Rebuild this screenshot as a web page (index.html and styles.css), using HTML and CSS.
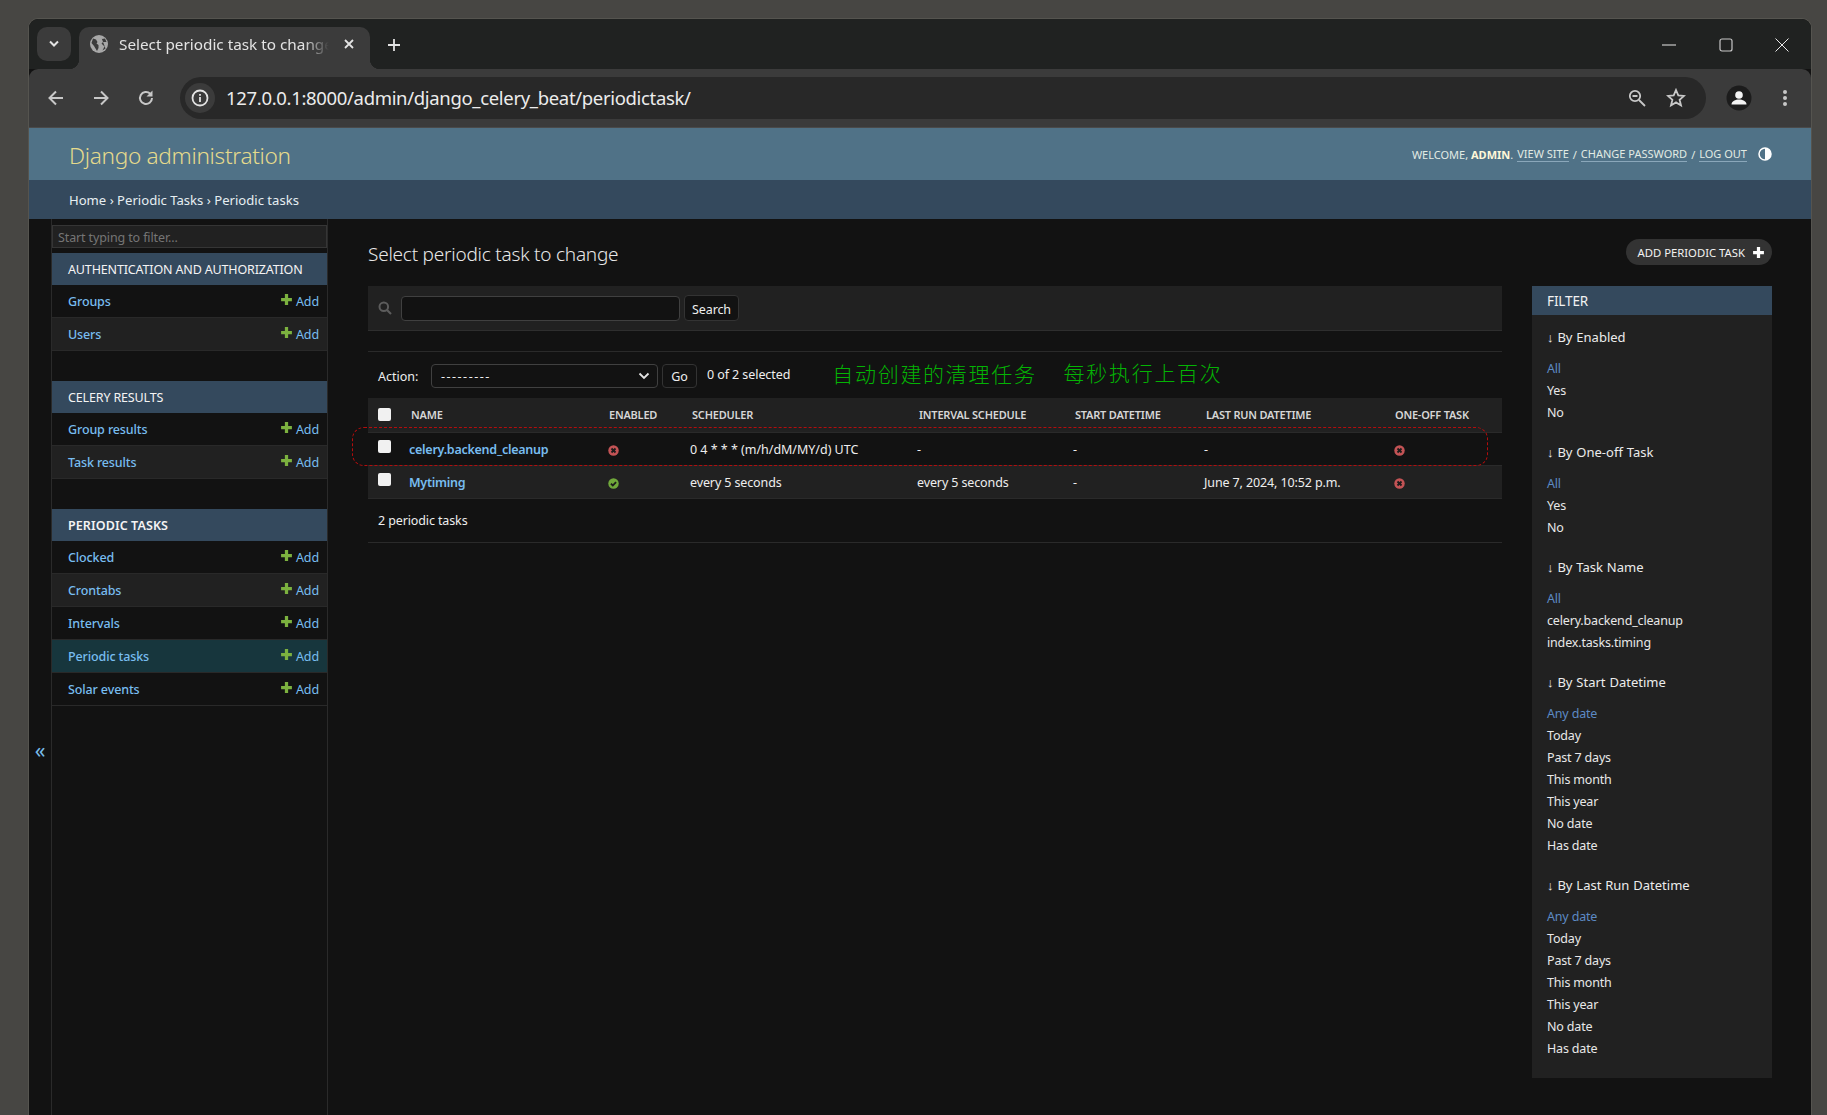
FILE: index.html
```html
<!DOCTYPE html>
<html lang="en">
<head>
<meta charset="utf-8">
<title>Select periodic task to change</title>
<link rel="stylesheet" href="styles.css">
</head>
<body>
<svg class="defs" width="0" height="0" aria-hidden="true">
  <symbol id="plus" viewBox="0 0 12 12"><path d="M4.500 1h3v3.500H11v3H7.500V11h-3V7.500H1v-3h3.500z" fill="currentColor"/></symbol>
  <symbol id="no" viewBox="0 0 12 12"><circle cx="6" cy="6" r="5.700" fill="#c35355"/><path d="M3.800 3.800l4.400 4.400M8.200 3.800L3.800 8.200" stroke="#1c1c1c" stroke-width="2"/></symbol>
  <symbol id="yes" viewBox="0 0 12 12"><circle cx="6" cy="6" r="5.700" fill="#70a83b"/><path d="M3.200 6.200l2 2 3.600-3.800" stroke="#1c1c1c" stroke-width="2" fill="none"/></symbol>
</svg>
<div class="window">
  <div class="tabstrip">
    <div class="tabsearch"><svg width="12" height="8" viewBox="0 0 12 8"><path d="M2 1.500l4 4 4-4" fill="none" stroke="#e3e3e3" stroke-width="2"/></svg></div>
    <div class="tab">
      <svg class="favicon" width="18" height="18" viewBox="0 0 18 18"><circle cx="9" cy="9" r="9" fill="#a8a8a8"/><path d="M3 3.500l3 1 1.500 2.500-1 1.500 2 1.500v3l-1.500 3L4 11 1.500 8zM11 1.500l1 2.500 3-.5 1.500 3.500-3.500 0-1.500 1.500 3 3-2 4 3-2" fill="#3b3b3b"/></svg>
      <span class="tabtitle">Select periodic task to change</span>
      <svg class="tabclose" width="10" height="10" viewBox="0 0 10 10"><path d="M1 1l8 8M9 1L1 9" stroke="#e3e3e3" stroke-width="1.800"/></svg>
    </div>
    <svg class="newtab" width="14" height="14" viewBox="0 0 14 14"><path d="M7 1v12M1 7h12" stroke="#e3e3e3" stroke-width="1.800"/></svg>
    <div class="winbtns">
      <svg width="14" height="14" viewBox="0 0 14 14"><path d="M0 7h14" stroke="#e8e8e8" stroke-width="1"/></svg>
      <svg width="14" height="14" viewBox="0 0 14 14"><rect x="1" y="1" width="12" height="12" rx="2" fill="none" stroke="#c8c8c8" stroke-width="1.200"/></svg>
      <svg width="14" height="14" viewBox="0 0 14 14"><path d="M.5.500l13 13M13.500.500l-13 13" stroke="#e8e8e8" stroke-width="1"/></svg>
    </div>
  </div>
  <div class="toolbar">
    <svg class="navicon" width="18" height="18" viewBox="0 0 18 18"><path d="M16 9H3M9 2.500L2.500 9 9 15.500" fill="none" stroke="#c7c7c7" stroke-width="2"/></svg>
    <svg class="navicon" width="18" height="18" viewBox="0 0 18 18"><path d="M2 9h13M9 2.500L15.500 9 9 15.500" fill="none" stroke="#c7c7c7" stroke-width="2"/></svg>
    <svg class="navicon" width="18" height="18" viewBox="0 0 18 18"><path d="M15 9a6 6 0 1 1-1.800-4.300" fill="none" stroke="#c7c7c7" stroke-width="2"/><path d="M15.500 1.500v6h-6z" fill="#c7c7c7"/></svg>
    <div class="omnibox">
      <div class="siteinfo"><svg width="18" height="18" viewBox="0 0 18 18"><circle cx="9" cy="9" r="7.500" fill="none" stroke="#e3e3e3" stroke-width="1.800"/><path d="M9 8v5M9 5v1.800" stroke="#e3e3e3" stroke-width="1.800"/></svg></div>
      <span class="url">127.0.0.1:8000/admin/django_celery_beat/periodictask/</span>
      <svg class="omni-zoom" width="18" height="18" viewBox="0 0 18 18"><circle cx="7" cy="7" r="5.200" fill="none" stroke="#c7c7c7" stroke-width="1.800"/><path d="M4.500 7h5M11 11l6 6" stroke="#c7c7c7" stroke-width="1.800"/></svg>
      <svg class="omni-star" width="20" height="20" viewBox="0 0 20 20"><path d="M10 2l2.300 5.400 5.700.5-4.400 3.800 1.400 5.700L10 14.400l-5 3 1.400-5.700L2 7.900l5.700-.5z" fill="none" stroke="#c7c7c7" stroke-width="1.800"/></svg>
    </div>
    <div class="avatar"><svg width="26" height="26" viewBox="0 0 26 26"><circle cx="13" cy="13" r="12.500" fill="#1c1c1c"/><circle cx="13" cy="10" r="3.800" fill="#f2f2f2"/><path d="M5.500 19.500c0-3.500 4-5 7.500-5s7.500 1.500 7.500 5z" fill="#f2f2f2"/></svg></div>
    <svg class="menu" width="4" height="18" viewBox="0 0 4 18"><circle cx="2" cy="3" r="2" fill="#c7c7c7"/><circle cx="2" cy="9" r="2" fill="#c7c7c7"/><circle cx="2" cy="15" r="2" fill="#c7c7c7"/></svg>
  </div>
  <header class="header">
    <div class="brand">Django administration</div>
    <div class="usertools">
      <span>Welcome, <strong>admin</strong>.</span>
      <a>View site</a><span>/</span><a>Change password</a><span>/</span><a>Log out</a>
      <svg class="themeicon" width="14" height="14" viewBox="0 0 14 14"><circle cx="7" cy="7" r="6" fill="#507287" stroke="#fff" stroke-width="1.500"/><path d="M7 1a6 6 0 0 1 0 12z" fill="#fff"/></svg>
    </div>
  </header>
  <div class="breadcrumbs">Home › Periodic Tasks › Periodic tasks</div>
  <div class="shell">
    <div class="toggle">«</div>
    <nav class="sidebar">
      <div class="navfilter">Start typing to filter...</div>
      <section class="module">
        <h2 class="modhead">Authentication and Authorization</h2>
        <div class="modrow"><a class="modlink">Groups</a><span class="add"><svg class="addplus"><use href="#plus"/></svg>Add</span></div>
        <div class="modrow"><a class="modlink">Users</a><span class="add"><svg class="addplus"><use href="#plus"/></svg>Add</span></div>
      </section>
      <section class="module">
        <h2 class="modhead">Celery Results</h2>
        <div class="modrow"><a class="modlink">Group results</a><span class="add"><svg class="addplus"><use href="#plus"/></svg>Add</span></div>
        <div class="modrow"><a class="modlink">Task results</a><span class="add"><svg class="addplus"><use href="#plus"/></svg>Add</span></div>
      </section>
      <section class="module">
        <h2 class="modhead modhead-bold">Periodic Tasks</h2>
        <div class="modrow"><a class="modlink">Clocked</a><span class="add"><svg class="addplus"><use href="#plus"/></svg>Add</span></div>
        <div class="modrow"><a class="modlink">Crontabs</a><span class="add"><svg class="addplus"><use href="#plus"/></svg>Add</span></div>
        <div class="modrow"><a class="modlink">Intervals</a><span class="add"><svg class="addplus"><use href="#plus"/></svg>Add</span></div>
        <div class="modrow modrow-current"><a class="modlink">Periodic tasks</a><span class="add"><svg class="addplus"><use href="#plus"/></svg>Add</span></div>
        <div class="modrow"><a class="modlink">Solar events</a><span class="add"><svg class="addplus"><use href="#plus"/></svg>Add</span></div>
      </section>
    </nav>
    <main class="content">
      <div class="titlebar">
        <h1 class="pagetitle">Select periodic task to change</h1>
        <a class="addbtn">Add periodic task<svg class="addbtn-plus"><use href="#plus"/></svg></a>
      </div>
      <div class="columns">
        <div class="results">
          <div class="searchbar">
            <svg class="searchicon" width="14" height="14" viewBox="0 0 14 14"><circle cx="5.800" cy="5.800" r="4.300" fill="none" stroke="#5c5c5c" stroke-width="2"/><path d="M9 9l4 4" stroke="#5c5c5c" stroke-width="2.200"/></svg>
            <div class="searchinput"></div>
            <div class="btn searchbtn">Search</div>
          </div>
          <div class="actions">
            <span class="actionlabel">Action:</span>
            <div class="select"><span class="dashes">---------</span><svg width="12" height="8" viewBox="0 0 12 8"><path d="M1.500 1.500L6 6l4.500-4.500" fill="none" stroke="#e3e3e3" stroke-width="1.800"/></svg></div>
            <div class="btn gobtn">Go</div>
            <span class="counter">0 of 2 selected</span>
            <span class="note note-a">自动创建的清理任务</span>
            <span class="note note-b">每秒执行上百次</span>
          </div>
          <div class="tablewrap">
            <table class="tasks">
              <thead>
                <tr>
                  <th class="c-check"><span class="checkbox"></span></th>
                  <th class="c-name">Name</th>
                  <th class="c-enabled">Enabled</th>
                  <th class="c-sched">Scheduler</th>
                  <th class="c-interval">Interval Schedule</th>
                  <th class="c-start">Start Datetime</th>
                  <th class="c-last">Last Run Datetime</th>
                  <th class="c-oneoff">One-off Task</th>
                </tr>
              </thead>
              <tbody>
                <tr>
                  <td><span class="checkbox"></span></td>
                  <td class="namecell">celery.backend_cleanup</td>
                  <td><svg class="boolicon"><use href="#no"/></svg></td>
                  <td class="croncell">0 4 * * * (m/h/dM/MY/d) UTC</td>
                  <td>-</td><td>-</td><td>-</td>
                  <td class="onecell"><svg class="boolicon"><use href="#no"/></svg></td>
                </tr>
                <tr>
                  <td><span class="checkbox"></span></td>
                  <td class="namecell">Mytiming</td>
                  <td><svg class="boolicon"><use href="#yes"/></svg></td>
                  <td>every 5 seconds</td>
                  <td>every 5 seconds</td><td>-</td><td>June 7, 2024, 10:52 p.m.</td>
                  <td class="onecell"><svg class="boolicon"><use href="#no"/></svg></td>
                </tr>
              </tbody>
            </table>
            <div class="dashed"></div>
          </div>
          <p class="paginator">2 periodic tasks</p>
        </div>
        <aside class="filter">
          <h2 class="filterhead">Filter</h2>
          <div class="fgroup"><h3 class="ftitle">↓ By Enabled</h3><ul class="flist"><li class="fsel">All</li><li>Yes</li><li>No</li></ul></div>
          <div class="fgroup"><h3 class="ftitle">↓ By One-off Task</h3><ul class="flist"><li class="fsel">All</li><li>Yes</li><li>No</li></ul></div>
          <div class="fgroup"><h3 class="ftitle">↓ By Task Name</h3><ul class="flist"><li class="fsel">All</li><li>celery.backend_cleanup</li><li>index.tasks.timing</li></ul></div>
          <div class="fgroup"><h3 class="ftitle">↓ By Start Datetime</h3><ul class="flist"><li class="fsel">Any date</li><li>Today</li><li>Past 7 days</li><li>This month</li><li>This year</li><li>No date</li><li>Has date</li></ul></div>
          <div class="fgroup"><h3 class="ftitle">↓ By Last Run Datetime</h3><ul class="flist"><li class="fsel">Any date</li><li>Today</li><li>Past 7 days</li><li>This month</li><li>This year</li><li>No date</li><li>Has date</li></ul></div>
        </aside>
      </div>
    </main>
  </div>
</div>
</body>
</html>
```
FILE: styles.css
```css
* { box-sizing: border-box; }
html, body { margin: 0; height: 100%; }
body {
  height: 1115px;
  overflow: hidden;
  padding: 19px 16px 0 29px;
  background: #474643;
  font-family: "Noto Sans", "Open Sans", sans-serif;
  font-size: 12.5px;
  letter-spacing: -0.12px;
  color: #eee;
}
.defs { position: absolute; }
h1, h2, h3, p, ul { margin: 0; padding: 0; }
ul { list-style: none; }

.window {
  height: 1096px;
  display: flex;
  flex-direction: column;
  overflow: hidden;
  background: #121212;
  border-radius: 9px 9px 0 0;
  box-shadow: 0 0 0 1px #55544f;
}

/* browser chrome */
.tabstrip {
  height: 50px;
  flex: none;
  display: flex;
  align-items: flex-start;
  background: #202221;
  padding: 8px 0 0 8px;
}
.tabsearch {
  width: 34px;
  height: 34px;
  margin-right: 8px;
  border-radius: 10px;
  background: #3b3b3b;
  display: flex;
  align-items: center;
  justify-content: center;
}
.tab {
  width: 291px;
  height: 42px;
  display: flex;
  align-items: center;
  padding: 0 0 8px 11px;
  background: #3b3b3b;
  border-radius: 10px 10px 0 0;
  position: relative;
}
.tab::before, .tab::after {
  content: "";
  position: absolute;
  bottom: 0;
  width: 10px;
  height: 10px;
  background: radial-gradient(circle at 0 0, transparent 10px, #3b3b3b 10.500px);
}
.tab::before { left: -10px; }
.tab::after { right: -10px; background: radial-gradient(circle at 100% 0, transparent 10px, #3b3b3b 10.500px); }
.favicon { flex: none; }
.tabtitle {
  width: 210px;
  margin-left: 11px;
  white-space: nowrap;
  overflow: hidden;
  font-size: 15.300px;
  letter-spacing: 0;
  color: #e3e3e3;
  -webkit-mask-image: linear-gradient(to right, #000 88%, transparent 100%);
  mask-image: linear-gradient(to right, #000 88%, transparent 100%);
}
.tabclose { flex: none; margin-left: 15px; }
.newtab { flex: none; margin: 11px 0 0 17px; }
.winbtns {
  margin-left: auto;
  width: 170px;
  display: flex;
  justify-content: space-between;
  padding: 11px 22px 0 21px;
}
.toolbar {
  height: 59px;
  flex: none;
  display: flex;
  align-items: center;
  background: #3b3b3b;
  padding: 0 21px 1px 18px;
  border-top-left-radius: 9px;
  border-top-right-radius: 9px;
  border-bottom: 1px solid #4a4a4a;
}
.navicon { flex: none; margin-right: 27px; }
.navicon:nth-child(3) { margin-right: 25px; }
.omnibox {
  width: 1526px;
  height: 42px;
  flex: none;
  display: flex;
  align-items: center;
  background: #282828;
  border-radius: 21px;
  padding: 0 20px 0 5px;
}
.siteinfo {
  width: 30px;
  height: 30px;
  flex: none;
  border-radius: 50%;
  background: #3b3b3b;
  display: flex;
  align-items: center;
  justify-content: center;
}
.url { margin-left: 11px; font-size: 18.500px; letter-spacing: -0.33px; color: #ececec; }
.omni-zoom { margin-left: auto; }
.omni-star { margin-left: 20px; }
.avatar { flex: none; margin-left: 20px; height: 26px; }
.menu { flex: none; margin-left: 31px; }

/* django header */
.header {
  height: 52px;
  flex: none;
  display: flex;
  align-items: center;
  justify-content: space-between;
  padding: 0 39px 0 40px;
  background: #507287;
}
.brand { padding-top: 2px; font-size: 22.600px; font-weight: 300; color: #e5da8c; letter-spacing: -0.3px; }
.usertools {
  display: flex;
  align-items: center;
  gap: 4px;
  font-size: 11px;
  letter-spacing: 0;
  text-transform: uppercase;
  color: #e2ebe4;
}
.usertools strong { font-weight: 700; color: #fff8d8; }
.usertools a { border-bottom: 1px solid #8aa7ba; line-height: 14px; }
.themeicon { margin-left: 7px; }
.breadcrumbs {
  height: 39px;
  flex: none;
  display: flex;
  align-items: center;
  padding-left: 40px;
  background: #34495d;
  font-size: 13.100px;
  letter-spacing: 0;
  color: #e6eef2;
}

/* layout */
.shell { flex: 1; display: flex; min-height: 0; overflow: hidden; }
.toggle {
  width: 23px;
  height: 1062px;
  flex: none;
  display: flex;
  align-items: center;
  justify-content: center;
  border-right: 1px solid #2a2a2a;
  color: #79bdea;
  font-size: 21px;
}
.sidebar {
  width: 276px;
  height: 1064px;
  flex: none;
  padding-top: 6px;
  border-right: 1px solid #2a2a2a;
}
.navfilter {
  height: 23px;
  margin-bottom: 5px;
  padding-left: 5px;
  line-height: 23px;
  background: #212121;
  border: 1px solid #353535;
  color: #757575;
  font-size: 12.500px;
}
.module { margin-bottom: 30px; }
.modhead {
  height: 32px;
  padding-left: 16px;
  line-height: 34px;
  background: #34495d;
  font-size: 12.500px;
  font-weight: 400;
  letter-spacing: -0.15px;
  text-transform: uppercase;
  color: #f4f4f4;
}
.modhead-bold { font-weight: 600; letter-spacing: 0.1px; }
.modrow {
  height: 33px;
  display: flex;
  align-items: center;
  justify-content: space-between;
  padding: 0 8px 0 16px;
  border-bottom: 1px solid #292929;
  background: #121212;
}
.modrow:nth-child(odd) { background: #212121; }
.modrow-current:nth-child(n) { background: #17363d; }
.modlink { color: #78bdf0; font-weight: 500; }
.add { display: flex; align-items: center; color: #78bdf0; }
.addplus { width: 13px; height: 13px; margin: -3px 3px 0 0; color: #7cb13f; }

/* content */
.content { flex: 1; min-width: 0; padding: 0 39px 0 40px; }
.titlebar {
  height: 67px;
  display: flex;
  justify-content: space-between;
  align-items: flex-start;
}
.pagetitle { margin-top: 22px; font-size: 19px; font-weight: 300; color: #e8e8e8; letter-spacing: -0.23px; }
.addbtn {
  margin-top: 20px;
  height: 26px;
  padding: 0 7px 0 11px;
  display: flex;
  align-items: center;
  border-radius: 13px;
  background: #333;
  font-size: 11.300px;
  letter-spacing: 0;
  text-transform: uppercase;
  color: #f2f2f2;
}
.addbtn-plus { width: 13px; height: 13px; margin-left: 7px; color: #fff; }
.columns { display: flex; justify-content: space-between; align-items: flex-start; }
.results { width: 1134px; }
.searchbar {
  height: 45px;
  display: flex;
  align-items: center;
  padding-left: 10px;
  background: #212121;
  border-bottom: 1px solid #2e2e2e;
}
.searchinput {
  width: 279px;
  height: 25px;
  margin-left: 9px;
  border: 1px solid #404040;
  border-radius: 4px;
  background: #121212;
}
.btn {
  display: flex;
  align-items: center;
  justify-content: center;
  border: 1px solid #333;
  border-radius: 4px;
  background: #121212;
  color: #eee;
}
.searchbtn { width: 55px; height: 26px; margin-left: 4px; padding-top: 2px; }
.actions {
  height: 47px;
  margin-top: 20px;
  display: flex;
  align-items: center;
  padding: 2px 0 0 10px;
  border-top: 1px solid #2a2a2a;
}
.actionlabel { width: 53px; letter-spacing: 0; }
.select {
  width: 227px;
  height: 24px;
  display: flex;
  align-items: center;
  justify-content: space-between;
  padding: 0 7px 0 9px;
  border: 1px solid #404040;
  border-radius: 4px;
  background: #121212;
}
.dashes { letter-spacing: 1.5px; }
.gobtn { width: 35px; height: 24px; margin-left: 4px; }
.counter { margin: -4px 0 0 10px; letter-spacing: -0.08px; }
.note {
  margin-top: -7px;
  font-family: "Noto Sans CJK SC", sans-serif;
  font-size: 21px;
  font-weight: 300;
  letter-spacing: 1.700px;
  color: #04b304;
}
.note-a { margin-left: 42px; }
.note-b { margin: -9px 0 0 27px; }
.tablewrap { position: relative; }
.tasks {
  width: 1134px;
  table-layout: fixed;
  border-collapse: collapse;
}
.tasks th {
  height: 34px;
  padding: 0 0 0 9px;
  text-align: left;
  font-size: 11px;
  font-weight: 600;
  letter-spacing: -0.22px;
  text-transform: uppercase;
  white-space: nowrap;
  background: #212121;
  color: #d6d6d6;
  border-bottom: 1px solid #2a2a2a;
}
.tasks td {
  height: 33px;
  padding: 1px 0 0 7px;
  white-space: nowrap;
  color: #eee;
  border-bottom: 1px solid #2a2a2a;
  background: #121212;
}
.tasks tbody tr:nth-child(even) td { background: #212121; }
.tasks th.c-check { padding-left: 10px; }
.tasks td:first-child { padding-left: 10px; vertical-align: top; padding-top: 7px; }
.c-check { width: 34px; }
.c-name { width: 199px; }
.c-enabled { width: 82px; }
.c-sched { width: 227px; }
.c-interval { width: 156px; }
.c-start { width: 131px; }
.c-last { width: 190px; }
.c-oneoff { width: 115px; }
.tasks th.c-enabled, .tasks th.c-oneoff { padding-left: 8px; }
.tasks td.namecell { color: #78bdf0; font-weight: 600; letter-spacing: -0.26px; }
.tasks td.croncell { letter-spacing: -0.02px; }
.checkbox {
  display: block;
  width: 13px;
  height: 13px;
  background: #f1f1f1;
  border-radius: 2px;
}
.boolicon { display: block; width: 11px; height: 11px; margin-top: 2px; }
.dashed {
  position: absolute;
  left: -16px;
  top: 29px;
  width: 1136px;
  height: 39px;
  border: 1px dashed #b30d0d;
  border-radius: 12px;
  pointer-events: none;
}
.paginator {
  height: 44px;
  padding-left: 10px;
  line-height: 44px;
  border-bottom: 1px solid #2a2a2a;
}

/* filter */
.filter {
  width: 240px;
  height: 792px;
  background: #212121;
}
.filterhead {
  height: 29px;
  padding-left: 15px;
  line-height: 31px;
  background: #34495d;
  font-size: 13.500px;
  font-weight: 400;
  text-transform: uppercase;
  color: #f2f2f2;
}
.fgroup { padding: 12px 15px 6.500px; }
.ftitle { height: 20px; margin-bottom: 10.500px; line-height: 20px; font-size: 13px; font-weight: 400; letter-spacing: 0; word-spacing: 0.5px; color: #ececec; }
.flist li { height: 22px; line-height: 22px; letter-spacing: -0.17px; color: #e8e8e8; }
.flist .fsel { color: #5d8ac4; }
```
